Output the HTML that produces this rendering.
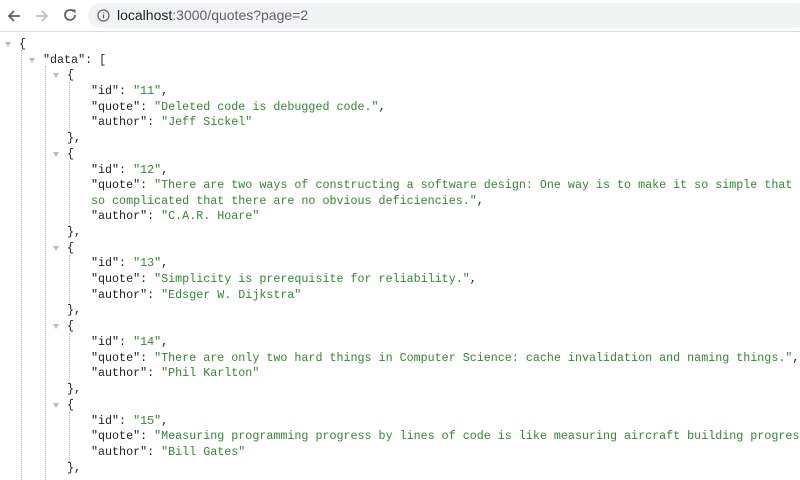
<!DOCTYPE html>
<html><head><style>
html,body{margin:0;width:800px;height:480px;overflow:hidden;background:#fff;font-family:"Liberation Mono",monospace;}
#w{position:absolute;left:0;top:0;width:800px;height:480px;overflow:hidden}
.bar{position:absolute;left:0;top:0;width:800px;height:31px;background:#fff;border-bottom:1px solid #dadce0;overflow:hidden}
.url{position:absolute;left:88px;top:3px;width:720px;height:25px;border-radius:13px;background:#f1f3f4;}
.url span{position:absolute;left:29px;top:4px;font:14px "Liberation Sans",sans-serif;color:#202124;}
.url span i{font-style:normal;color:#5f6368}
.l{position:absolute;font-size:11.7px;white-space:pre;color:#222;line-height:15px}
.s{color:#2e8b2e}
.t{position:absolute;width:0;height:0;border-left:3px solid transparent;border-right:3px solid transparent;border-top:5px solid #bbb}
.d{position:absolute;width:0;border-left:1px dotted #bbb}
</style></head><body><div id="w">
<div class="bar">
<svg style="position:absolute;left:6px;top:8px" width="16" height="16" viewBox="0 0 16 16"><path d="M14 8H3M8 3L3 8l5 5" stroke="#5f6368" stroke-width="1.8" fill="none"/></svg>
<svg style="position:absolute;left:34px;top:8px" width="16" height="16" viewBox="0 0 16 16"><path d="M2 8h11M8 3l5 5-5 5" stroke="#bdc1c6" stroke-width="1.8" fill="none"/></svg>
<svg style="position:absolute;left:62px;top:7px" width="16" height="16" viewBox="0 0 16 16"><path d="M13 8a5 5 0 1 1-1.5-3.6" stroke="#5f6368" stroke-width="1.8" fill="none"/><path d="M9.5 2.5h4v4z" fill="#5f6368"/></svg>
<div class="url">
<svg style="position:absolute;left:9px;top:6px" width="13" height="13" viewBox="0 0 13 13"><circle cx="6.5" cy="6.5" r="5.5" stroke="#5f6368" stroke-width="1.2" fill="none"/><path d="M6.5 5.5v4M6.5 3.3v1" stroke="#5f6368" stroke-width="1.3"/></svg>
<span>localhost<i>:3000/quotes?page=2</i></span></div>
</div>
<div class="d" style="left:21px;top:50px;height:430px"></div>
<div class="d" style="left:45px;top:66px;height:414px"></div>
<div class="d" style="left:69px;top:82px;height:50px"></div>
<div class="d" style="left:69px;top:161px;height:65px"></div>
<div class="d" style="left:69px;top:255px;height:50px"></div>
<div class="d" style="left:69px;top:333px;height:50px"></div>
<div class="d" style="left:69px;top:412px;height:50px"></div>
<div class="t" style="left:5px;top:42px"></div>
<div class="t" style="left:29px;top:58px"></div>
<div class="t" style="left:53px;top:73px"></div>
<div class="t" style="left:53px;top:152px"></div>
<div class="t" style="left:53px;top:246px"></div>
<div class="t" style="left:53px;top:324px"></div>
<div class="t" style="left:53px;top:403px"></div>
<div class="l" style="left:19px;top:37px">{</div>
<div class="l" style="left:43px;top:53px">"data": [</div>
<div class="l" style="left:67px;top:68px">{</div>
<div class="l" style="left:91px;top:84px">"id": <span class="s">"11"</span>,</div>
<div class="l" style="left:91px;top:100px">"quote": <span class="s">"Deleted code is debugged code."</span>,</div>
<div class="l" style="left:91px;top:115px">"author": <span class="s">"Jeff Sickel"</span></div>
<div class="l" style="left:67px;top:131px">},</div>
<div class="l" style="left:67px;top:147px">{</div>
<div class="l" style="left:91px;top:163px">"id": <span class="s">"12"</span>,</div>
<div class="l" style="left:91px;top:178px">"quote": <span class="s">"There are two ways of constructing a software design: One way is to make it so simple that there</span></div>
<div class="l" style="left:91px;top:194px"><span class="s">so complicated that there are no obvious deficiencies."</span>,</div>
<div class="l" style="left:91px;top:209px">"author": <span class="s">"C.A.R. Hoare"</span></div>
<div class="l" style="left:67px;top:225px">},</div>
<div class="l" style="left:67px;top:241px">{</div>
<div class="l" style="left:91px;top:256px">"id": <span class="s">"13"</span>,</div>
<div class="l" style="left:91px;top:272px">"quote": <span class="s">"Simplicity is prerequisite for reliability."</span>,</div>
<div class="l" style="left:91px;top:288px">"author": <span class="s">"Edsger W. Dijkstra"</span></div>
<div class="l" style="left:67px;top:303px">},</div>
<div class="l" style="left:67px;top:319px">{</div>
<div class="l" style="left:91px;top:335px">"id": <span class="s">"14"</span>,</div>
<div class="l" style="left:91px;top:351px">"quote": <span class="s">"There are only two hard things in Computer Science: cache invalidation and naming things."</span>,</div>
<div class="l" style="left:91px;top:366px">"author": <span class="s">"Phil Karlton"</span></div>
<div class="l" style="left:67px;top:382px">},</div>
<div class="l" style="left:67px;top:398px">{</div>
<div class="l" style="left:91px;top:414px">"id": <span class="s">"15"</span>,</div>
<div class="l" style="left:91px;top:429px">"quote": <span class="s">"Measuring programming progress by lines of code is like measuring aircraft building progress by</span></div>
<div class="l" style="left:91px;top:445px">"author": <span class="s">"Bill Gates"</span></div>
<div class="l" style="left:67px;top:461px">},</div>
</div></body></html>
